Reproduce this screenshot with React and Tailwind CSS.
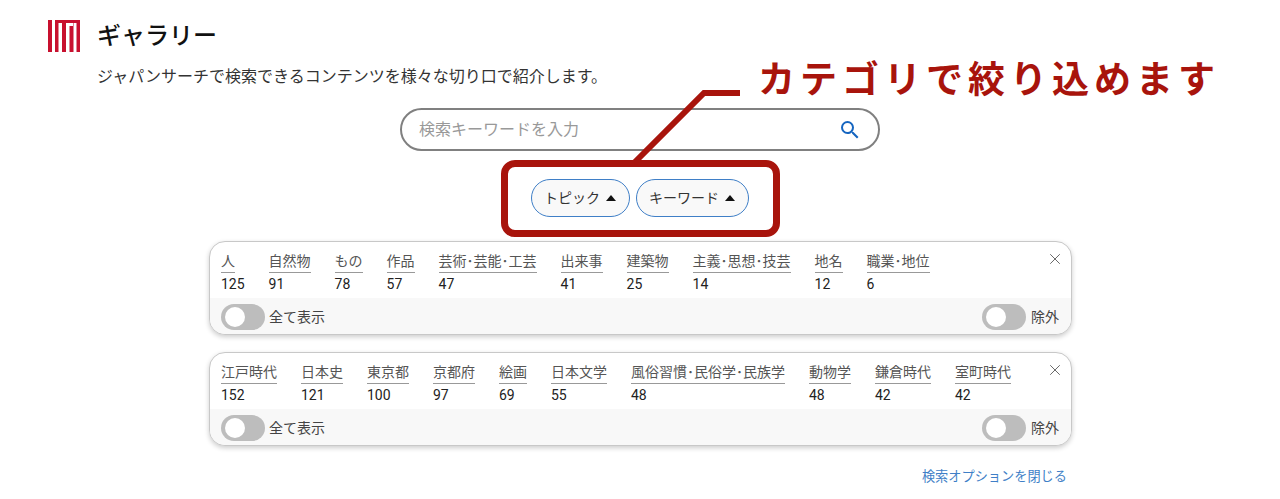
import React from "react";
import { X } from "lucide-react";

const FONT = 'font-["Roboto","Noto_Sans_CJK_JP",sans-serif]';

const topics = [
  ["人", 125], ["自然物", 91], ["もの", 78], ["作品", 57], ["芸術･芸能･工芸", 47],
  ["出来事", 41], ["建築物", 25], ["主義･思想･技芸", 14], ["地名", 12], ["職業･地位", 6],
];

const keywords = [
  ["江戸時代", 152], ["日本史", 121], ["東京都", 100], ["京都府", 97], ["絵画", 69],
  ["日本文学", 55], ["風俗習慣･民俗学･民族学", 48], ["動物学", 48], ["鎌倉時代", 42], ["室町時代", 42],
];

function Logo() {
  return (
    <svg width="32" height="32" viewBox="0 0 32 32" className="shrink-0">
      <g fill="#c8102e">
        <rect x="0" y="0" width="4" height="32" />
        <path d="M7 0h25v32h-3.5V3H25.5V32H25V3H18v29h-4V3h-3.5v29H7z" />
        <rect x="21.5" y="6" width="3.5" height="26" />
      </g>
    </svg>
  );
}

function Toggle() {
  return (
    <div className="w-11 h-[26px] rounded-full bg-[#bdbdbd] flex items-center pl-[4px]">
      <div className="w-[20px] h-[20px] rounded-full bg-white" />
    </div>
  );
}

function FacetCard({ items }) {
  return (
    <div className="w-[863px] h-[94px] rounded-2xl border border-[#c8c8c8] shadow-[0_2px_5px_rgba(0,0,0,0.2)] bg-white overflow-hidden">
      <div className="relative h-[56px] flex gap-6 pl-[11.5px] pt-[9px]">
        {items.map(([name, count]) => (
          <div key={name} className="flex flex-col items-start">
            <span className="text-sm leading-[21px] text-[#555] border-b border-[#999]">{name}</span>
            <span className="text-sm leading-[20px] pt-[1px] text-[#222]">{count}</span>
          </div>
        ))}
        <X size={18} strokeWidth={1.3} className="absolute right-[7px] top-[8px] text-[#666]" />
      </div>
      <div className="h-[37px] bg-[#f8f8f8] flex items-center justify-between pl-[11.5px] pr-[11.5px]">
        <div className="flex items-center gap-1">
          <Toggle />
          <span className="text-sm text-[#444]">全て表示</span>
        </div>
        <div className="flex items-center gap-[5px]">
          <Toggle />
          <span className="text-sm text-[#444]">除外</span>
        </div>
      </div>
    </div>
  );
}

function Pill({ label }) {
  return (
    <button className="h-[38px] pl-[12px] pr-[13px] rounded-full border border-[#3f7fc7] bg-[#f9f9f9] flex items-center gap-[6px] text-sm text-[#333]">
      {label}
      <span className="w-0 h-0 border-x-[5px] border-x-transparent border-b-[6px] border-b-[#111]" />
    </button>
  );
}

export default function App() {
  return (
    <div className={`relative w-[1280px] h-[499px] overflow-hidden bg-white ${FONT}`}>
      <div className="flex items-center gap-[17px] pl-12 pt-5">
        <Logo />
        <h1 className="text-2xl font-medium leading-8 text-[#111]">ギャラリー</h1>
      </div>
      <p className="pl-[97px] mt-[13px] text-base leading-[24px] text-[#333]">
        ジャパンサーチで検索できるコンテンツを様々な切り口で紹介します。
      </p>

      <div className="flex flex-col items-center mt-[19px]">
        <div className="w-[480px] h-[43px] rounded-full border-2 border-[#808080] flex items-center justify-between pl-[17px] pr-4">
          <span className="text-base text-[#999]">検索キーワードを入力</span>
          <svg width="24" height="24" viewBox="0 0 24 24" fill="#1565c0">
            <path d="M15.5 14h-.79l-.28-.27A6.47 6.47 0 0 0 16 9.5 6.5 6.5 0 1 0 9.5 16c1.61 0 3.09-.59 4.23-1.57l.27.28v.79l5 4.99L20.49 19l-4.99-5zm-6 0C7.01 14 5 11.99 5 9.5S7.01 5 9.5 5 14 7.01 14 9.5 11.99 14 9.5 14z" />
          </svg>
        </div>
        <div className="flex gap-[6px] mt-[28px]">
          <Pill label="トピック" />
          <Pill label="キーワード" />
        </div>
        <div className="mt-[24px]">
          <FacetCard items={topics} />
        </div>
        <div className="mt-[17px]">
          <FacetCard items={keywords} />
        </div>
      </div>

      <div className="flex justify-end pr-[213px] mt-[21px]">
        <a className="text-[13.2px] leading-5 text-[#3f7fc7]">検索オプションを閉じる</a>
      </div>

      {/* annotation over the page */}
      <div className="absolute left-[501px] top-[160px] w-[279px] h-[77px] rounded-[14px] border-[7px] border-[#a8140c]" />
      <svg className="absolute left-0 top-0" width="1280" height="499" fill="none">
        <path d="M634 163L704 93H740" stroke="#a8140c" strokeWidth="6" />
      </svg>
      <span className="absolute left-[758px] top-[54px] text-[37px] leading-[54px] font-bold tracking-[5px] whitespace-nowrap text-[#a8140c]">
        カテゴリで絞り込めます
      </span>
    </div>
  );
}
